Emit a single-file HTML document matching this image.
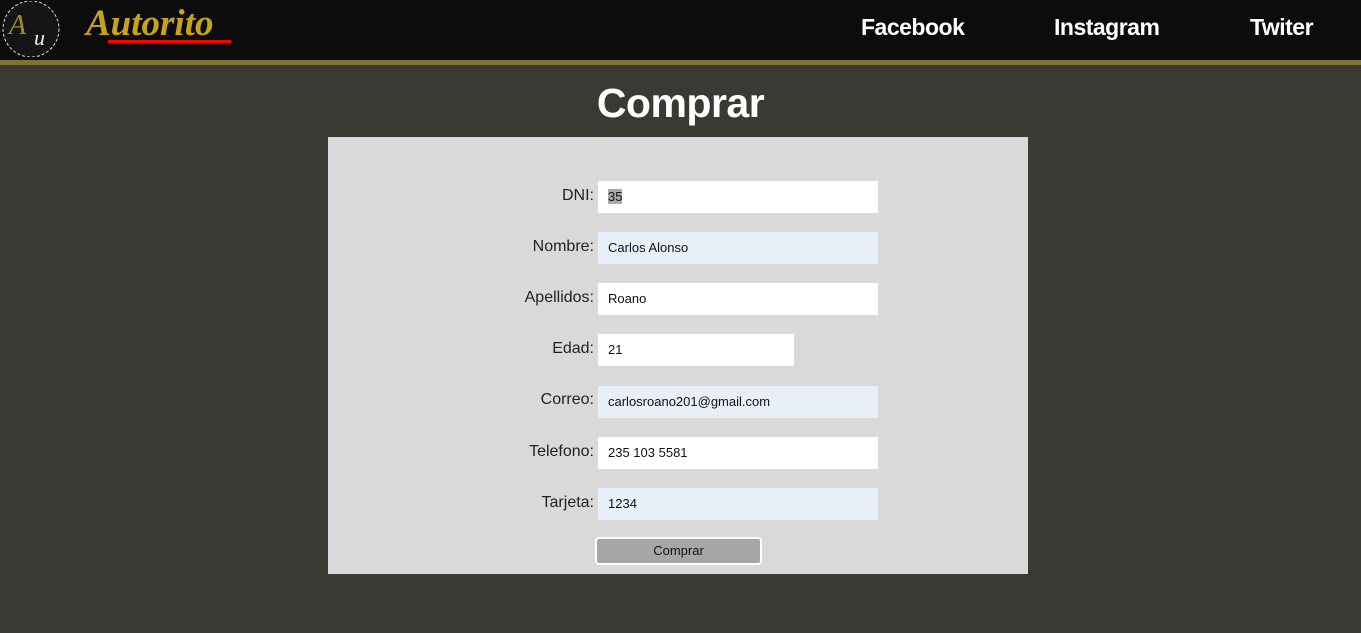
<!DOCTYPE html>
<html><head><style>
body{margin:0;width:1361px;height:633px;background:#3a3a35;font-family:"Liberation Sans",sans-serif;position:relative;overflow:hidden}
.hdr{position:absolute;left:0;top:0;width:1361px;height:60px;background:#0c0c0c;border-bottom:5px solid #7a7530}
.nav{position:absolute;top:14px;color:#fff;font-weight:bold;font-size:23px;letter-spacing:-0.5px}
.logo{position:absolute;left:86px;top:2px;color:#c8a21a;font:italic bold 37px "Liberation Serif",serif}
.ul{position:absolute;left:108px;top:40px;width:123px;height:3px;background:#f00}
h1{position:absolute;top:80px;left:0;width:1361px;margin:0;text-align:center;color:#fff;font-size:41px;font-weight:bold;letter-spacing:-0.5px}
.panel{position:absolute;left:328px;top:137px;width:700px;height:437px;background:#d9d9d9}
.lbl{position:absolute;right:434px;font-size:16px;color:#222;text-align:right}
.in{position:absolute;left:270px;width:280px;height:32px;background:#fff;font-size:13px;line-height:32px;padding-left:10px;box-sizing:border-box;color:#111}
.blue{background:#e8eff9}
.btn{position:absolute;left:267px;top:400px;width:163px;height:24px;background:#a6a6a6;border:2px solid #fff;border-radius:4px;font-size:13px;text-align:center;line-height:24px;color:#111}
</style></head><body>
<div class="hdr">
<svg style="position:absolute;left:1px;top:1px" width="60" height="56"><circle cx="30" cy="28" r="28" fill="#151515" stroke="#ddd" stroke-width="1" stroke-dasharray="3 2"/><text x="8" y="33" font-family="Liberation Serif" font-style="italic" font-size="28" fill="#a08a30">A</text><text x="33" y="44" font-family="Liberation Serif" font-style="italic" font-size="22" fill="#eee">u</text></svg>
<div class="logo">Autorito</div><div class="ul"></div>
<div class="nav" style="left:861px">Facebook</div>
<div class="nav" style="left:1054px">Instagram</div>
<div class="nav" style="left:1250px">Twiter</div>
</div>
<h1>Comprar</h1>
<div class="panel">
<div class="lbl" style="top:50px">DNI:</div><div class="in" style="top:44px"><span style="background:#aaa">35</span></div>
<div class="lbl" style="top:101px">Nombre:</div><div class="in blue" style="top:95px">Carlos Alonso</div>
<div class="lbl" style="top:152px">Apellidos:</div><div class="in" style="top:146px">Roano</div>
<div class="lbl" style="top:203px">Edad:</div><div class="in" style="top:197px;width:196px">21</div>
<div class="lbl" style="top:254px">Correo:</div><div class="in blue" style="top:249px">carlosroano201@gmail.com</div>
<div class="lbl" style="top:306px">Telefono:</div><div class="in" style="top:300px">235 103 5581</div>
<div class="lbl" style="top:357px">Tarjeta:</div><div class="in blue" style="top:351px">1234</div>
<div class="btn">Comprar</div>
</div>
</body></html>
